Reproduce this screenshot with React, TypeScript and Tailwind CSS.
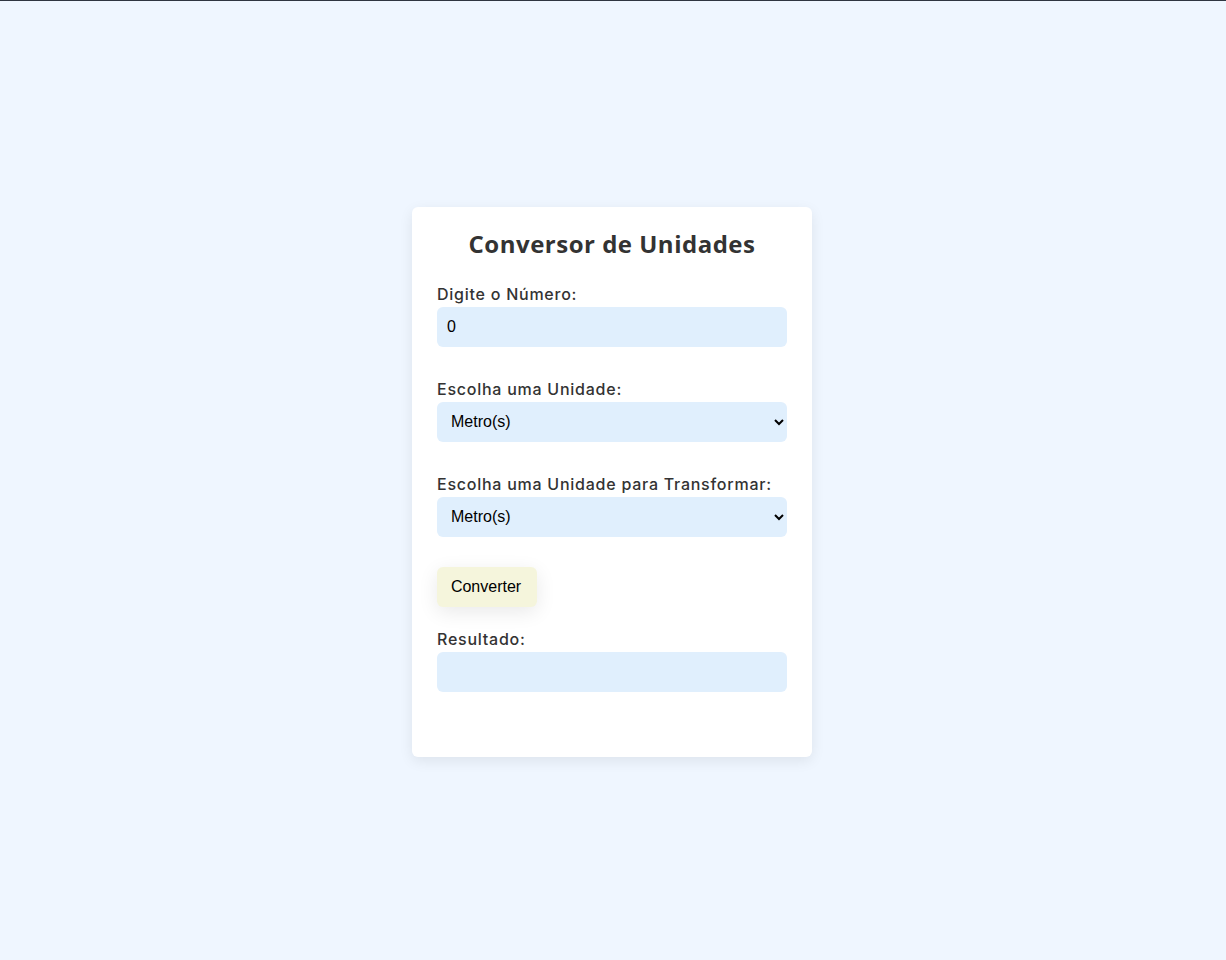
import React from "react";

const labelCls =
  "block h-6 leading-6 text-[16px] font-medium text-[#333] [font-family:Inter,sans-serif] tracking-[0.75px]";
const fieldCls =
  "mt-[1px] block w-full h-10 px-[10px] rounded-[6px] bg-[#e0effd] text-black text-[16px] [font-family:'Liberation_Sans',Arial,sans-serif] outline-none";

export default function App() {
  return (
    <div className="min-h-screen bg-[#eff6ff] border-t border-[#2f3541] flex items-center justify-center">
      <div className="w-[400px] mr-[2px] mt-[2px] bg-white rounded-[6px] shadow-[0_4px_14px_rgba(0,0,0,0.08)] px-[25px] pt-[25px] pb-[65px]">
        <h1 className="text-center text-[24px] leading-[24px] h-[26px] font-bold text-[#333] [font-family:'Open_Sans',sans-serif] tracking-[0.5px]">
          Conversor de Unidades
        </h1>
        <div className="mt-[24px]">
          <label className={labelCls}>Digite o Número:</label>
          <input type="number" defaultValue={0} className={fieldCls} />
        </div>
        <div className="mt-[30px]">
          <label className={labelCls}>Escolha uma Unidade:</label>
          <select className={fieldCls}>
            <option>Metro(s)</option>
            <option>Centímetro(s)</option>
            <option>Quilômetro(s)</option>
          </select>
        </div>
        <div className="mt-[30px]">
          <label className={labelCls}>Escolha uma Unidade para Transformar:</label>
          <select className={fieldCls}>
            <option>Metro(s)</option>
            <option>Centímetro(s)</option>
            <option>Quilômetro(s)</option>
          </select>
        </div>
        <button className="mt-[30px] block w-[100px] h-10 pr-[2px] rounded-[6px] bg-[#f5f5dc] text-black text-[16px] [font-family:'Liberation_Sans',Arial,sans-serif] shadow-[0_5px_20px_rgba(0,0,0,0.09)]">
          Converter
        </button>
        <div className="mt-[20px]">
          <label className={labelCls}>Resultado:</label>
          <div className="mt-[1px] w-full h-10 rounded-[6px] bg-[#e0effd]" />
        </div>
      </div>
    </div>
  );
}
